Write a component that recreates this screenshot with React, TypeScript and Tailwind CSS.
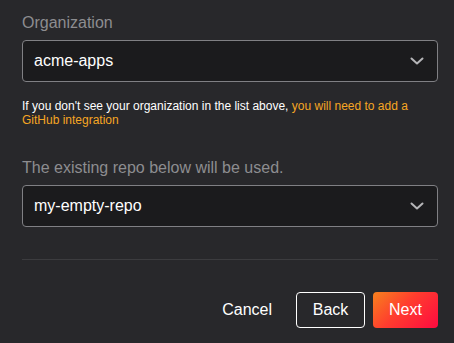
import { useState } from "react";

function Chevron() {
  return (
    <svg width="14" height="8" viewBox="0 0 14 8" fill="none" className="shrink-0">
      <path d="M1.5 1.5L7 6.5L12.5 1.5" stroke="#b5b5b8" strokeWidth="2" strokeLinecap="round" strokeLinejoin="round" />
    </svg>
  );
}

function SelectBox({ value }: { value: string }) {
  return (
    <div className="flex items-center justify-between h-[42px] pl-[11px] pr-[13px] rounded-[4px] border border-[#808084] bg-[#1b1b1d] text-white text-[16px]">
      <span>{value}</span>
      <Chevron />
    </div>
  );
}

export default function App() {
  const [org] = useState("acme-apps");
  const [repo] = useState("my-empty-repo");

  return (
    <div
      className="w-[454px] h-[343px] bg-[#28282b] pl-[22px] pr-[16px] pt-[11px] overflow-hidden"
      style={{ fontFamily: '"Liberation Sans", Arial, sans-serif' }}
    >
      <div className="text-[16px] leading-[24px] text-[#8d8d90] mb-[5px]">Organization</div>
      <SelectBox value={org} />

      <p className="mt-[17px] text-[12px] leading-[14px] text-white">
        If you don't see your organization in the list above,{" "}
        <a className="text-[#f6a623]">you will need to add a GitHub integration</a>
      </p>

      <div className="mt-[29px] text-[16px] leading-[24px] text-[#8d8d90] mb-[5px]">
        The existing repo below will be used.
      </div>
      <SelectBox value={repo} />

      <div className="mt-[32px] h-px bg-[#3c3c3f]" />

      <div className="mt-[32px] flex justify-end items-center gap-2">
        <button className="h-9 px-4 text-[16px] text-white">Cancel</button>
        <button className="h-9 w-[69px] rounded-[4px] border border-white text-[16px] text-white">Back</button>
        <button className="h-9 w-[65px] rounded-[4px] text-[16px] text-white bg-[linear-gradient(135deg,#f7821e_0%,#ff3d2e_45%,#ff0a40_100%)]">
          Next
        </button>
      </div>
    </div>
  );
}
